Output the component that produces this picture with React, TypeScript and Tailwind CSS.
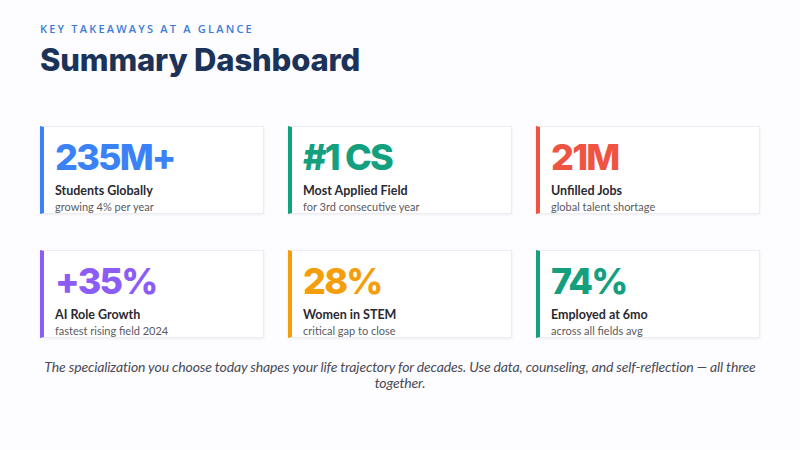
const stats = [
  { value: "235M+", label: "Students Globally", sub: "growing 4% per year", bar: "border-l-[#3b82f6]", text: "text-[#3b82f6]" },
  { value: "#1 CS", label: "Most Applied Field", sub: "for 3rd consecutive year", bar: "border-l-[#10a37f]", text: "text-[#12a07e]" },
  { value: "21M", label: "Unfilled Jobs", sub: "global talent shortage", bar: "border-l-[#ef5442]", text: "text-[#ef5442]" },
  { value: "+35%", label: "AI Role Growth", sub: "fastest rising field 2024", bar: "border-l-[#8b5cf6]", text: "text-[#8b5cf6]" },
  { value: "28%", label: "Women in STEM", sub: "critical gap to close", bar: "border-l-[#f59e0b]", text: "text-[#f59e0b]" },
  { value: "74%", label: "Employed at 6mo", sub: "across all fields avg", bar: "border-l-[#14a07e]", text: "text-[#14a07e]" },
];

export default function App() {
  return (
    <div className="w-[800px] h-[450px] bg-[#fdfcfe] px-10 pt-[21px] font-['Lato',sans-serif] overflow-hidden">
      {/* Header */}
      <p className="text-[11px] font-semibold tracking-[0.2em] text-[#3b7dd8] leading-4 font-['Open_Sans',sans-serif]">
        KEY TAKEAWAYS AT A GLANCE
      </p>
      <h1 className="mt-[4px] text-[31px] leading-[38px] font-extrabold tracking-[-0.005em] text-[#1b3358] font-['Inter',sans-serif]">
        Summary Dashboard
      </h1>

      {/* Stat cards */}
      <div className="mt-[47px] grid grid-cols-3 gap-x-6 gap-y-9">
        {stats.map((s) => (
          <div
            key={s.label}
            className={`h-[88px] bg-white border border-[#ececf2] border-l-4 ${s.bar} shadow-[0_1px_3px_rgba(0,0,0,0.06)] pl-[11px] pt-[9px]`}
          >
            <div className={`text-[36px] leading-[42px] font-extrabold tracking-[-0.05em] font-['Inter',sans-serif] ${s.text}`}>
              {s.value}
            </div>
            <div className="mt-[5px] text-[12.5px] leading-4 font-bold text-[#2a2a33]">{s.label}</div>
            <div className="text-[11px] leading-4 text-[#5a5a62]">{s.sub}</div>
          </div>
        ))}
      </div>

      {/* Quote */}
      <p className="mt-[21px] text-center italic text-[14px] leading-4 tracking-[-0.01em] text-[#4a4a55] font-['Lato',sans-serif] px-1">
        The specialization you choose today shapes your life trajectory for decades. Use data, counseling, and self-reflection — all three together.
      </p>
    </div>
  );
}
